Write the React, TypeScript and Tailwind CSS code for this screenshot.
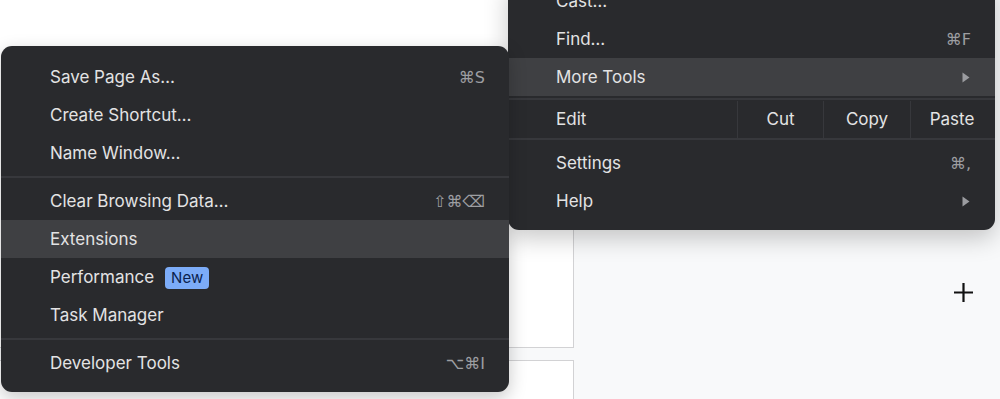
import React from "react";

const font = { fontFamily: "Inter, 'DejaVu Sans', sans-serif" };

function Arrow() {
  return (
    <svg width="8" height="11" viewBox="0 0 8 11" className="mr-[1px]">
      <path d="M0.5 0.5 L7.5 5.5 L0.5 10.5 Z" fill="#9b9ca0" />
    </svg>
  );
}

function Sep() {
  return <div className="my-[4px] h-[2px] bg-[#37383c]" />;
}

type RowProps = {
  label: React.ReactNode;
  right?: React.ReactNode;
  active?: boolean;
  pl: string;
};

function Row({ label, right, active, pl }: RowProps) {
  return (
    <div
      className={`flex h-[38px] items-center justify-between pr-[24px] ${pl} ${
        active ? "bg-[#3f4043]" : ""
      }`}
    >
      <div className="flex items-center pt-[1px] text-[17px] text-[#e3e3e4]">{label}</div>
      {right && (
        <div
          className="pt-[1px] text-[16px] text-[#9d9ea2]"
          style={{ fontFamily: "'DejaVu Sans', Inter, sans-serif" }}
        >
          {right}
        </div>
      )}
    </div>
  );
}

function MoreToolsMenu() {
  const pl = "pl-[49px]";
  return (
    <div className="absolute left-[1px] top-[46px] z-20 w-[508px] rounded-[11px] bg-[#292a2d] pt-[12px] pb-[10px] shadow-[0_6px_18px_rgba(0,0,0,0.22)]">
      <Row pl={pl} label="Save Page As…" right="⌘S" />
      <Row pl={pl} label="Create Shortcut…" />
      <Row pl={pl} label="Name Window…" />
      <Sep />
      <Row pl={pl} label="Clear Browsing Data…" right="⇧⌘⌫" />
      <Row pl={pl} label="Extensions" active />
      <Row
        pl={pl}
        label={
          <>
            Performance
            <span className="ml-[11px] rounded-[4px] bg-[#7cacf8] px-[6px] py-[1px] text-[15px] leading-[20px] text-[#0b1f4d]">
              New
            </span>
          </>
        }
      />
      <Row pl={pl} label="Task Manager" />
      <Sep />
      <Row pl={pl} label="Developer Tools" right="⌥⌘I" />
    </div>
  );
}

function MainMenu() {
  const pl = "pl-[48px]";
  return (
    <div className="absolute left-[508px] top-[-18px] z-10 w-[487px] rounded-b-[11px] bg-[#292a2d] pb-[10px] shadow-[0_8px_24px_rgba(0,0,0,0.22)]">
      <Row pl={pl} label="Cast…" />
      <Row pl={pl} label="Find…" right="⌘F" />
      <Row pl={pl} label="More Tools" right={<Arrow />} active />
      <div className="mt-[2px] flex h-[42px] border-y-2 border-[#37383c] pt-[1px] text-[17px] text-[#e3e3e4]">
        <div className="flex w-[229px] items-center pl-[48px]">Edit</div>
        <div className="flex w-[86px] items-center justify-center border-l border-[#37383c]">Cut</div>
        <div className="flex w-[87px] items-center justify-center border-l border-[#37383c]">Copy</div>
        <div className="flex flex-1 items-center justify-center border-l border-[#37383c] pr-[2px]">Paste</div>
      </div>
      <div className="h-[4px]" />
      <Row pl={pl} label="Settings" right="⌘," />
      <Row pl={pl} label="Help" right={<Arrow />} />
    </div>
  );
}

export default function App() {
  return (
    <div className="relative flex h-[399px] w-[1000px] overflow-hidden bg-[#f8f9fa]" style={font}>
      <div className="flex w-[574px] flex-col gap-[12px]">
        <div className="h-[348px] border-r border-b border-[#d2d2d4] bg-white" />
        <div className="flex-1 border-t border-r border-[#d2d2d4] bg-white" />
      </div>
      <div className="flex flex-1 justify-end pt-[282px] pr-[26px]">
        <svg width="21" height="21" viewBox="0 0 21 21">
          <path d="M10.5 1 V20 M1 10.5 H20" stroke="#111" strokeWidth="2.2" />
        </svg>
      </div>
      <MainMenu />
      <MoreToolsMenu />
    </div>
  );
}
